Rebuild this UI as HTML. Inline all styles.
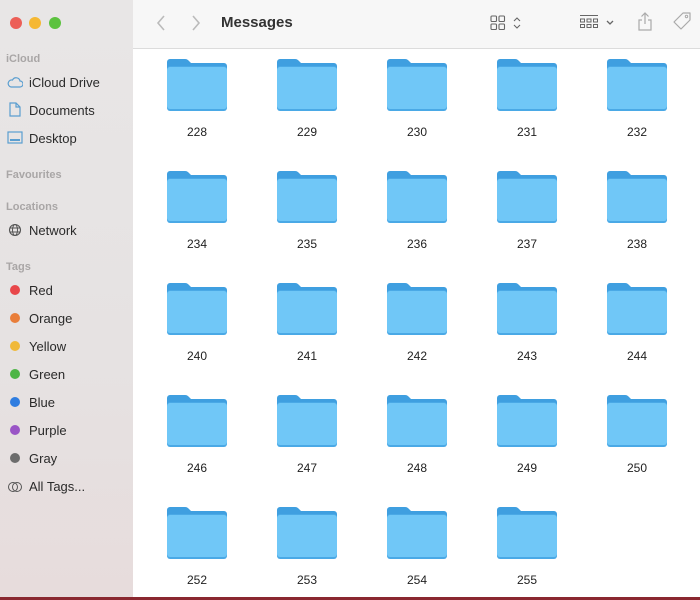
<!DOCTYPE html>
<html><head><style>
*{margin:0;padding:0;box-sizing:border-box}
body{width:700px;height:600px;overflow:hidden;font-family:"Liberation Sans",sans-serif;background:#fff;position:relative}
#side{position:absolute;left:0;top:0;width:133px;height:597px;background:linear-gradient(#e8e6e6,#e6e2e2 60%,#e7dcdc)}
#bottom{position:absolute;left:0;top:597px;width:700px;height:3px;background:#8a2830}
.dot{position:absolute;width:12px;height:12px;border-radius:50%;top:17px}
.sh{position:absolute;left:6px;font-size:11px;font-weight:bold;color:#a9a6a6}
.it{position:absolute;left:29px;font-size:13px;color:#2a2a2a}
.tg{position:absolute;left:10px;width:10px;height:10px;border-radius:50%}
#tb{position:absolute;left:133px;top:0;width:567px;height:49px;background:#f7f7f7;border-bottom:1px solid #dcdcdc}
.f{position:absolute;width:60px;text-align:center;font-size:12px;color:#222}
.f svg{display:block}
.f span{display:block;margin-top:14px}
</style></head><body>
<div id="side">
<div class="dot" style="left:10px;background:#ec5f57"></div>
<div class="dot" style="left:29px;background:#f5b833"></div>
<div class="dot" style="left:49px;background:#5cc23f"></div>
<div class="sh" style="top:53px">iCloud</div>
<svg style="position:absolute;left:7px;top:76px" width="16" height="12"><path d="M4 11h9a3 3 0 0 0 0-6 4 4 0 0 0-7.5-1A3.5 3.5 0 0 0 4 11z" fill="none" stroke="#5a9ed0" stroke-width="1.2"/></svg>
<div class="it" style="top:75px">iCloud Drive</div>
<svg style="position:absolute;left:9px;top:102px" width="12" height="15"><path d="M1 1h6l4 4v9H1z M7 1v4h4" fill="none" stroke="#5a9ed0" stroke-width="1.2"/></svg>
<div class="it" style="top:103px">Documents</div>
<svg style="position:absolute;left:7px;top:131px" width="16" height="14"><rect x="1" y="1" width="14" height="11" fill="none" stroke="#5a9ed0" stroke-width="1.2"/><rect x="3" y="8" width="10" height="2" fill="#5a9ed0"/></svg>
<div class="it" style="top:131px">Desktop</div>
<div class="sh" style="top:169px">Favourites</div>
<div class="sh" style="top:201px">Locations</div>
<svg style="position:absolute;left:8px;top:223px" width="14" height="14"><circle cx="7" cy="7" r="5.5" fill="none" stroke="#555" stroke-width="1.1"/><ellipse cx="7" cy="7" rx="2.5" ry="5.5" fill="none" stroke="#555" stroke-width="1"/><path d="M1.5 5h11M1.5 9h11" stroke="#555"/></svg>
<div class="it" style="top:223px">Network</div>
<div class="sh" style="top:261px">Tags</div>
<div class="tg" style="top:285px;background:#e8474a"></div><div class="it" style="top:283px">Red</div>
<div class="tg" style="top:313px;background:#e97e3a"></div><div class="it" style="top:311px">Orange</div>
<div class="tg" style="top:341px;background:#f0b93a"></div><div class="it" style="top:339px">Yellow</div>
<div class="tg" style="top:369px;background:#4cb545"></div><div class="it" style="top:367px">Green</div>
<div class="tg" style="top:397px;background:#2f7de0"></div><div class="it" style="top:395px">Blue</div>
<div class="tg" style="top:425px;background:#9a55c6"></div><div class="it" style="top:423px">Purple</div>
<div class="tg" style="top:453px;background:#6c6c6c"></div><div class="it" style="top:451px">Gray</div>
<svg style="position:absolute;left:7px;top:481px" width="16" height="12"><circle cx="6" cy="6" r="4.5" fill="none" stroke="#555"/><circle cx="10" cy="6" r="4.5" fill="none" stroke="#555"/></svg>
<div class="it" style="top:479px">All Tags...</div>
</div>
<div id="tb">
<svg style="position:absolute;left:22px;top:14px" width="12" height="18"><path d="M9 2L3 9l6 7" fill="none" stroke="#bbb" stroke-width="1.6"/></svg>
<svg style="position:absolute;left:57px;top:14px" width="12" height="18"><path d="M3 2l6 7-6 7" fill="none" stroke="#bbb" stroke-width="1.6"/></svg>
<div style="position:absolute;left:88px;top:14px;font-size:15px;font-weight:bold;color:#333">Messages</div>
<svg style="position:absolute;left:357px;top:15px" width="40" height="16"><g fill="none" stroke="#666" stroke-width="1.1"><rect x="1" y="1" width="5.5" height="5.5" rx="1"/><rect x="9" y="1" width="5.5" height="5.5" rx="1"/><rect x="1" y="9" width="5.5" height="5.5" rx="1"/><rect x="9" y="9" width="5.5" height="5.5" rx="1"/><path d="M24 6l3-3 3 3M24 10l3 3 3-3"/></g></svg>
<svg style="position:absolute;left:446px;top:14px" width="40" height="16"><g fill="none" stroke="#666" stroke-width="1"><path d="M1 1.5h18"/><rect x="1.5" y="5" width="4" height="3"/><rect x="8" y="5" width="4" height="3"/><rect x="14.5" y="5" width="4" height="3"/><rect x="1.5" y="10.5" width="4" height="3"/><rect x="8" y="10.5" width="4" height="3"/><rect x="14.5" y="10.5" width="4" height="3"/><path d="M28 7l3 3 3-3" stroke-width="1.3"/></g></svg>
<svg style="position:absolute;left:503px;top:11px" width="18" height="22"><g fill="none" stroke="#aaa" stroke-width="1.2"><path d="M9 2v11M5.5 5.5L9 2l3.5 3.5M6 9H3v10h12V9h-3"/></g></svg>
<svg style="position:absolute;left:538px;top:11px" width="22" height="22"><path d="M12 2h7v7L10 18 3 11z" fill="none" stroke="#aaa" stroke-width="1.2" stroke-linejoin="round"/><circle cx="15.5" cy="5.5" r="1.2" fill="none" stroke="#aaa"/></svg>
</div>
<div id="grid"></div>
<div id="bottom"></div>
<script>
var labels=[[228,229,230,231,232],[234,235,236,237,238],[240,241,242,243,244],[246,247,248,249,250],[252,253,254,255]];
var svg='<svg width="60" height="52" viewBox="0 0 60 52"><path d="M0 3a3 3 0 0 1 3-3h15c2 0 3 1 4 2l2 2h33a3 3 0 0 1 3 3v10H0z" fill="#3f9fe0"/><rect x="0" y="7" width="60" height="45" rx="3" fill="#4aa9e6"/><rect x="0" y="8" width="60" height="42" rx="3" fill="#70c7f7"/></svg>';
var h='';labels.forEach(function(r,i){r.forEach(function(l,j){h+='<div class="f" style="left:'+(167+110*j)+'px;top:'+(59+112*i)+'px">'+svg+'<span>'+l+'</span></div>';});});
document.getElementById('grid').innerHTML=h;
</script>
</body></html>
